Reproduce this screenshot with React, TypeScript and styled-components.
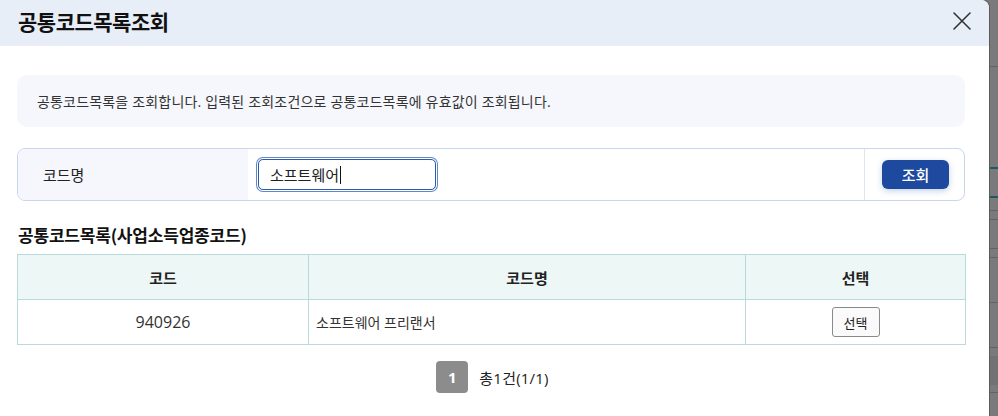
import React from 'react';
import styled, { createGlobalStyle } from 'styled-components';

const GlobalStyle = createGlobalStyle`
  html, body {
    margin: 0;
    padding: 0;
    background: #7a7a7a;
    font-family: "Open Sans", "Noto Sans CJK KR", sans-serif;
    color: #222;
  }
`;

const Screen = styled.div`
  display: flex;
  width: 998px;
  height: 416px;
  overflow: hidden;
`;

const Modal = styled.section`
  width: 989px;
  flex: none;
  background: #fff;
  border-top-right-radius: 8px;
  box-shadow: 1px 0 2px rgba(0, 0, 0, 0.35);
  display: flex;
  flex-direction: column;
`;

const Header = styled.header`
  height: 46px;
  flex: none;
  background: #e8eef8;
  border-top-right-radius: 8px;
  display: flex;
  align-items: center;
  justify-content: space-between;
  padding: 0 17px 5px 18px;
  box-sizing: border-box;
`;

const Title = styled.h1`
  margin: 0;
  font-family: "Noto Sans CJK KR", sans-serif;
  font-size: 21px;
  font-weight: 700;
  letter-spacing: -0.5px;
  color: #111;
`;

const CloseButton = styled.button`
  border: 0;
  background: transparent;
  padding: 0;
  width: 20px;
  height: 20px;
  display: flex;
  align-items: center;
  justify-content: center;
  cursor: pointer;
`;

const Content = styled.div`
  padding: 29px 24px 0 17px;
  display: flex;
  flex-direction: column;
`;

const InfoBox = styled.div`
  height: 52px;
  background: #f5f7fc;
  border-radius: 10px;
  display: flex;
  align-items: center;
  padding: 0 20px;
  font-size: 14px;
  letter-spacing: 0.18px;
  color: #333;
`;

const SearchBox = styled.div`
  margin-top: 21px;
  height: 53px;
  box-sizing: border-box;
  border: 1px solid #c9d7ec;
  border-radius: 8px;
  display: grid;
  grid-template-columns: 230px 1fr 100px;
  overflow: hidden;
`;

const SearchLabel = styled.div`
  background: #f5f7fc;
  display: flex;
  align-items: center;
  padding-left: 25px;
  font-size: 15px;
  color: #222;
`;

const SearchField = styled.div`
  display: flex;
  align-items: center;
  padding-left: 10px;
`;

const FakeInput = styled.div`
  width: 178px;
  height: 31px;
  box-sizing: border-box;
  border: 1px solid #2a5aa8;
  border-radius: 5px;
  box-shadow: 0 0 0 1px #fff, 0 0 0 2px #5f88c8;
  display: flex;
  align-items: center;
  padding-left: 11px;
  font-size: 15px;
  color: #222;
`;

const Caret = styled.span`
  display: inline-block;
  width: 1px;
  height: 18px;
  background: #111;
  margin-left: 1px;
`;

const SearchAction = styled.div`
  border-left: 1px solid #dde5f0;
  display: flex;
  align-items: center;
  justify-content: center;
  padding-left: 2px;
`;

const PrimaryButton = styled.button`
  width: 67px;
  height: 29px;
  border: 0;
  border-radius: 6px;
  background: #1d4a9e;
  color: #fff;
  font-family: inherit;
  font-size: 15px;
  font-weight: 500;
  box-shadow: 0 2px 6px rgba(29, 74, 158, 0.25);
`;

const SectionTitle = styled.h2`
  margin: 21px 0 0 1px;
  font-family: "Noto Sans CJK KR", sans-serif;
  font-size: 17px;
  font-weight: 700;
  letter-spacing: -0.2px;
  color: #111;
  line-height: 26px;
`;

const Table = styled.table`
  margin-top: 6px;
  width: 948px;
  border-collapse: collapse;
  table-layout: fixed;
  font-size: 14px;
`;

const Th = styled.th`
  height: 44px;
  background: #edf7f6;
  border: 1px solid #b9d9dc;
  font-size: 15px;
  font-weight: 700;
  color: #222;
  padding: 0;
`;

const Td = styled.td<{ $align?: string; $size?: number }>`
  height: 44px;
  border: 1px solid #b9d9dc;
  text-align: ${(p) => p.$align || 'center'};
  padding: ${(p) => (p.$align === 'left' ? '0 0 0 7px' : '0')};
  font-size: ${(p) => p.$size || 14}px;
  color: #333;
`;

const SmallButton = styled.button`
  width: 48px;
  height: 30px;
  border: 1px solid #8a8a8a;
  border-radius: 3px;
  background: #fafafa;
  font-family: inherit;
  font-size: 13px;
  color: #222;
  padding: 0;
`;

const Pager = styled.div`
  margin-top: 16px;
  display: flex;
  align-items: center;
  justify-content: center;
  gap: 11px;
  padding-left: 3px;
`;

const PageNumber = styled.span`
  width: 32px;
  height: 32px;
  border-radius: 4px;
  background: #8c8c8c;
  color: #fff;
  font-weight: 700;
  font-size: 15px;
  display: flex;
  align-items: center;
  justify-content: center;
`;

const PageInfo = styled.span`
  font-size: 15px;
  letter-spacing: 0.2px;
  color: #222;
`;

const Backdrop = styled.div`
  flex: 1;
  background: #7a7a7a;
  display: flex;
  flex-direction: column;
  margin-left: 1px;
`;

const BackLine = styled.div<{ $gap: number; $color?: string; $h?: number }>`
  margin-top: ${(p) => p.$gap}px;
  height: ${(p) => p.$h || 1}px;
  flex: none;
  background: ${(p) => p.$color || '#626363'};
`;

const CloseIcon = () => (
  <svg width="18" height="18" viewBox="0 0 18 18">
    <path d="M1 1 L17 17 M17 1 L1 17" stroke="#333" strokeWidth="1.6" strokeLinecap="round" />
  </svg>
);

const rows = [{ code: '940926', name: '소프트웨어 프리랜서' }];

const backLines = [
  { gap: 66 },
  { gap: 100, color: '#1f5a61', h: 2 },
  { gap: 27, color: '#1f5a61', h: 2 },
  { gap: 12 },
  { gap: 8 },
  { gap: 28 },
  { gap: 8 },
  { gap: 44 },
  { gap: 44 },
  { gap: 8, color: '#727272', h: 29 },
  { gap: 7 },
];

export default function App() {
  return (
    <>
      <GlobalStyle />
      <Screen>
        <Modal>
          <Header>
            <Title>공통코드목록조회</Title>
            <CloseButton aria-label="닫기">
              <CloseIcon />
            </CloseButton>
          </Header>
          <Content>
            <InfoBox>공통코드목록을 조회합니다. 입력된 조회조건으로 공통코드목록에 유효값이 조회됩니다.</InfoBox>
            <SearchBox>
              <SearchLabel>코드명</SearchLabel>
              <SearchField>
                <FakeInput>
                  소프트웨어
                  <Caret />
                </FakeInput>
              </SearchField>
              <SearchAction>
                <PrimaryButton>조회</PrimaryButton>
              </SearchAction>
            </SearchBox>
            <SectionTitle>공통코드목록(사업소득업종코드)</SectionTitle>
            <Table>
              <colgroup>
                <col style={{ width: 291 }} />
                <col style={{ width: 437 }} />
                <col style={{ width: 220 }} />
              </colgroup>
              <thead>
                <tr>
                  <Th>코드</Th>
                  <Th>코드명</Th>
                  <Th>선택</Th>
                </tr>
              </thead>
              <tbody>
                {rows.map((r) => (
                  <tr key={r.code}>
                    <Td $size={16}>{r.code}</Td>
                    <Td $align="left">{r.name}</Td>
                    <Td>
                      <SmallButton>선택</SmallButton>
                    </Td>
                  </tr>
                ))}
              </tbody>
            </Table>
            <Pager>
              <PageNumber>1</PageNumber>
              <PageInfo>총1건(1/1)</PageInfo>
            </Pager>
          </Content>
        </Modal>
        <Backdrop>
          {backLines.map((l, i) => (
            <BackLine key={i} $gap={l.gap} $color={l.color} $h={l.h} />
          ))}
        </Backdrop>
      </Screen>
    </>
  );
}
